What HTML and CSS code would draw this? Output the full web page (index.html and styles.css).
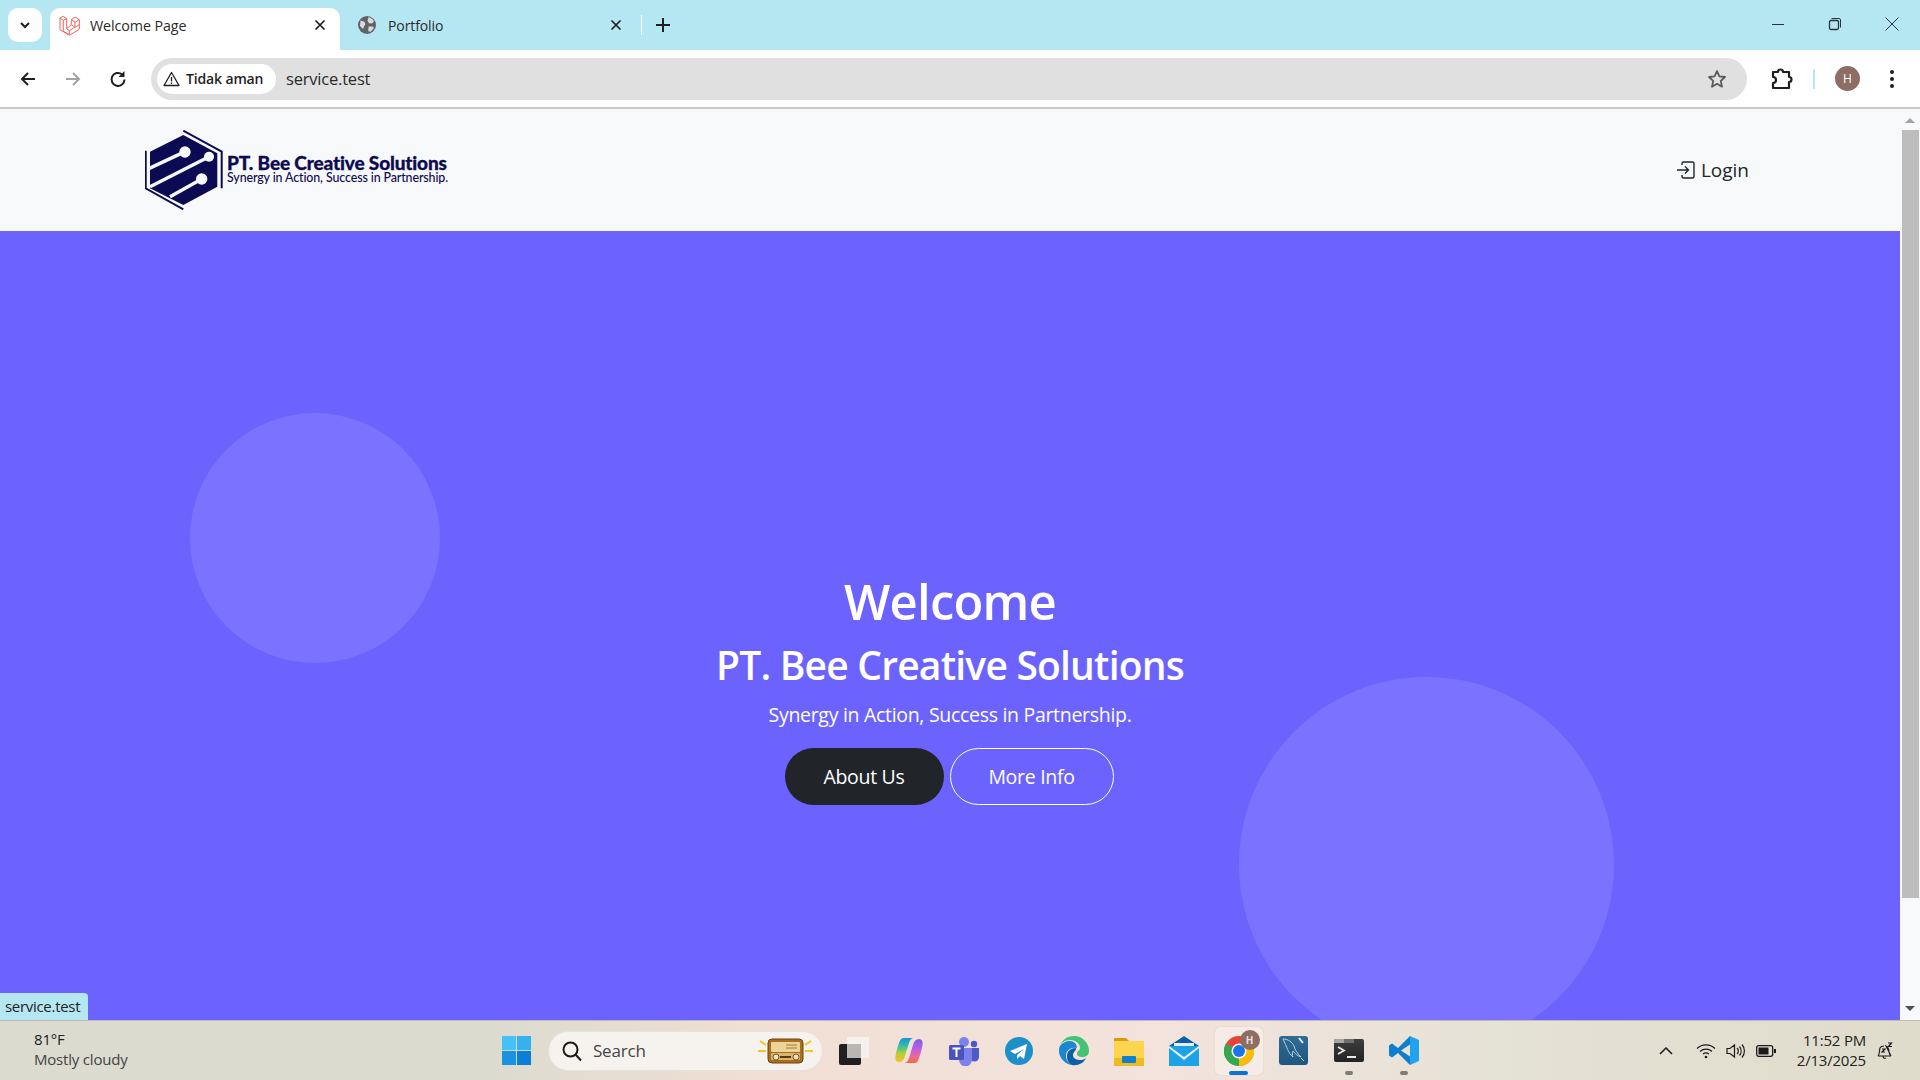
FILE: index.html
```html
<!DOCTYPE html>
<html lang="en">
<head>
<meta charset="utf-8">
<title>Welcome Page</title>
<link rel="stylesheet" href="styles.css">
</head>
<body>
<div class="tabstrip">
  <div class="tab-search"><svg width="12" height="12" viewBox="0 0 12 12"><path d="M2 4l4 4 4-4" fill="none" stroke="#1f1f1f" stroke-width="2"/></svg></div>
  <div class="tab tab-active">
    <svg class="fav" width="22" height="22" viewBox="0 0 22 22" fill="none" stroke="#f0665a" stroke-width="1" stroke-linejoin="round"><path d="M5.300 2.300L2 4v11.700l9.300 5.600 10-6V5.700L17 3l-3.700 2.700v5l-4.600 4V4.700zM2 4l3.300 2.300 3.400-1.600M5.300 6.300v11M5.300 17.300l6 3.300v-3.900l-2.600-2M11.300 16.700l10-6M13.300 5.700L17 8.300l4.300-2.600M17 8.300v4.900M13.300 10.700l3.700 2.500"/></svg>
    <span class="tab-title">Welcome Page</span>
    <svg class="tab-x" width="12" height="12" viewBox="0 0 12 12"><path d="M1.500 1.500l9 9M10.500 1.500l-9 9" stroke="#1f1f1f" stroke-width="1.700"/></svg>
  </div>
  <div class="tab">
    <svg class="fav" width="18" height="18" viewBox="0 0 18 18"><circle cx="9" cy="9" r="9" fill="#5f6368"/><path d="M10.500 1.200c2.500.5 4.500 2 5.500 4l-2 2.300-3-.3-1.500-2.500zM2.500 4.500L6 5.500 7.500 8 6 10.500 5 13 2 10z" fill="#d9dadb"/><path d="M10.500 10.500h4.500l.8 1.700-3.500 3.700-2-1z" fill="#d9dadb"/></svg>
    <span class="tab-title">Portfolio</span>
    <svg class="tab-x" width="12" height="12" viewBox="0 0 12 12"><path d="M1.500 1.500l9 9M10.500 1.500l-9 9" stroke="#1f1f1f" stroke-width="1.700"/></svg>
  </div>
  <div class="tab-sep"></div>
  <svg class="tab-plus" width="14" height="14" viewBox="0 0 14 14"><path d="M7 0v14M0 7h14" stroke="#1f1f1f" stroke-width="2"/></svg>
  <div class="win-controls">
    <svg width="14" height="14" viewBox="0 0 14 14"><path d="M1 7.500h12" stroke="#2a3338" stroke-width="1"/></svg>
    <svg width="14" height="14" viewBox="0 0 14 14" fill="none" stroke="#2a3338" stroke-width="1"><rect x="1.500" y="3.500" width="9" height="9" rx="1.500" stroke-width="1.300"/><path d="M3.500 1.500h7.500a1.500 1.500 0 0 1 1.500 1.500v7.500"/></svg>
    <svg width="14" height="14" viewBox="0 0 14 14"><path d="M.5.5l13 13M13.500.5l-13 13" stroke="#2a3338" stroke-width="1"/></svg>
  </div>
</div>
<div class="toolbar">
  <svg class="tool-ico" width="18" height="18" viewBox="0 0 18 18" fill="none" stroke="#1f1f1f" stroke-width="2"><path d="M16 9H3M9 3L3 9l6 6"/></svg>
  <svg class="tool-ico" width="18" height="18" viewBox="0 0 18 18" fill="none" stroke="#a3a3a3" stroke-width="2"><path d="M2 9h13M9 3l6 6-6 6"/></svg>
  <svg class="tool-ico" width="18" height="18" viewBox="0 0 18 18"><path d="M15.500 9.500A6.500 6.500 0 1 1 13 4.300" fill="none" stroke="#1f1f1f" stroke-width="2"/><path d="M15.500 1v6h-6z" fill="#1f1f1f"/></svg>
  <div class="omnibox">
    <div class="chip">
      <svg width="17" height="16" viewBox="0 0 17 16" fill="none" stroke="#1f1f1f" stroke-width="1.300" stroke-linejoin="round"><path d="M8.500 1.500L16 14.500H1zM8.500 6v4.500M8.500 11.500v1.500"/></svg>
      <span>Tidak aman</span>
    </div>
    <span class="url">service.test</span>
    <svg class="star" width="20" height="20" viewBox="0 0 20 20" fill="none" stroke="#5b5b5b" stroke-width="1.800" stroke-linejoin="round"><path d="M10 2l2.400 5.400 5.600.6-4.200 3.900 1.200 5.800L10 14.800l-5 2.900 1.200-5.800L2 8l5.600-.6z"/></svg>
  </div>
  <svg class="ext" width="24" height="24" viewBox="0 0 24 24" fill="none" stroke="#1f1f1f" stroke-width="2.200" stroke-linejoin="round"><path d="M4 5h5a2.500 2.500 0 0 1 5 0h6v5a2.500 2.500 0 0 1 0 5v6H4v-5a3 3 0 0 0 0-6z"/></svg>
  <div class="tool-sep"></div>
  <div class="avatar">H</div>
  <svg class="dots" width="6" height="20" viewBox="0 0 6 20" fill="#1f1f1f"><circle cx="3" cy="3" r="2"/><circle cx="3" cy="10" r="2"/><circle cx="3" cy="17" r="2"/></svg>
</div>
<div class="viewport">
  <main class="page">
    <nav class="navbar">
      <div class="brand">
        <svg width="80" height="80" viewBox="0 0 80 80">
          <path d="M38.300.7L76.700 21.700V58.300" fill="none" stroke="#0c0a52" stroke-width="2"/>
          <path d="M.7 20.700V58.300L38.300 79.300" fill="none" stroke="#0c0a52" stroke-width="2"/>
          <path d="M5 21.700L38.300 5 72.300 23.300V56.700L38.300 75 5 58.300z" fill="#0c0a52"/>
          <path d="M4.300 38.300L40 21.700M5 56.700L64 26.700M25 66.700L56.700 49" fill="none" stroke="#f8f9fa" stroke-width="3.500"/>
          <circle cx="40" cy="22" r="5.700" fill="#f8f9fa"/><circle cx="64" cy="26.700" r="5" fill="#f8f9fa"/><circle cx="56.700" cy="49" r="5.700" fill="#f8f9fa"/>
        </svg>
        <div class="brand-text">
          <span class="brand-name">PT. Bee Creative Solutions</span>
          <span class="brand-tag">Synergy in Action, Success in Partnership.</span>
        </div>
      </div>
      <a class="login"><svg width="20" height="20" viewBox="0 0 20 20" fill="none" stroke="#212529" stroke-width="1.400"><path d="M6 5V3.500A1.500 1.500 0 0 1 7.500 2h9A1.500 1.500 0 0 1 18 3.500v13a1.500 1.500 0 0 1-1.500 1.500h-9A1.500 1.500 0 0 1 6 16.500V15M1 10h11M9 6.500l3.500 3.500L9 13.500"/></svg>Login</a>
    </nav>
    <section class="hero">
      <div class="circle circle-a"></div>
      <div class="circle circle-b"></div>
      <h1>Welcome</h1>
      <h2>PT. Bee Creative Solutions</h2>
      <p>Synergy in Action, Success in Partnership.</p>
      <div class="actions">
        <a class="btn btn-dark">About Us</a>
        <a class="btn btn-line">More Info</a>
      </div>
    </section>
    <div class="status">service.test</div>
  </main>
  <aside class="scrollbar">
    <svg width="20" height="14" viewBox="0 0 20 14"><path d="M5 10l5-5 5 5z" fill="#a3a3a3"/></svg>
    <div class="thumb"></div>
    <svg width="20" height="14" viewBox="0 0 20 14"><path d="M5 4l5 5 5-5z" fill="#505050"/></svg>
  </aside>
</div>
<footer class="taskbar">
  <div class="weather"><span class="temp">81°F</span><span class="cond">Mostly cloudy</span></div>
  <div class="task-center">
    <svg class="start" width="29" height="29" viewBox="0 0 30 30"><rect width="14.500" height="14.500" fill="#45c1f5"/><rect x="15.500" width="14.500" height="14.500" fill="#36b0ee"/><rect y="15.500" width="14.500" height="14.500" fill="#1a92e2"/><rect x="15.500" y="15.500" width="14.500" height="14.500" fill="#0b7ed8"/></svg>
    <div class="search">
      <svg width="22" height="22" viewBox="0 0 22 22" fill="none" stroke="#1b1b1b" stroke-width="2"><circle cx="9.500" cy="9.500" r="7"/><path d="M14.500 14.500l5.500 6"/></svg>
      <span>Search</span>
      <svg class="radio" width="55" height="26" viewBox="0 0 55 26"><path d="M2 3l6 4M0 13h8M53 3l-6 4M55 13h-8" stroke="#f2c81e" stroke-width="2"/><rect x="10" y="1" width="35" height="24" rx="4" fill="#a96e1e" stroke="#6e4310"/><rect x="13" y="4" width="29" height="10" rx="1" fill="#ecd39a"/><path d="M28 7h11M28 10h11" stroke="#a8762c"/><rect x="13" y="15" width="29" height="7" rx="1" fill="#d9b56e"/><path d="M22 19h11" stroke="#5a3a14" stroke-width="2"/><circle cx="18" cy="19" r="3" fill="#f0e0b8" stroke="#5a3a14" stroke-width=".8"/><circle cx="38" cy="19" r="3" fill="#f0e0b8" stroke="#5a3a14" stroke-width=".8"/></svg>
    </div>
    <div class="apps">
      <span class="app"><svg width="30" height="28" viewBox="0 0 30 28"><rect x="0" y="7" width="22" height="21" rx="2" fill="#1f1f1f"/><rect x="8" y="0" width="22" height="21" rx="1" fill="#f5f1ec"/><rect x="8" y="7" width="14" height="14" fill="#b9b7b3"/></svg></span>
      <span class="app"><svg width="28" height="25" viewBox="0 0 28 25"><defs><linearGradient id="cpa" x1="0" y1="0" x2="0" y2="1"><stop offset="0" stop-color="#1f8fe0"/><stop offset=".35" stop-color="#37c2a0"/><stop offset=".65" stop-color="#b8d030"/><stop offset="1" stop-color="#f5c030"/></linearGradient><linearGradient id="cpb" x1="0" y1="0" x2="0" y2="1"><stop offset="0" stop-color="#7a5fe8"/><stop offset=".45" stop-color="#c060e0"/><stop offset=".75" stop-color="#f06a90"/><stop offset="1" stop-color="#f0683a"/></linearGradient></defs><path d="M9 0H20C16 0 15 2 14 5L10 18C9 22 7 24 4 24 1 24 0 21 .5 18 1.500 12 3 8 4 5 5 2 6 0 9 0z" fill="url(#cpa)"/><path d="M19 25H8C12 25 13 23 14 20L18 7C19 3 21 1 24 1 27 1 28 4 27.500 7 26.500 13 25 17 24 20 23 23 22 25 19 25z" fill="url(#cpb)"/></svg></span>
      <span class="app"><svg width="30" height="30" viewBox="0 0 30 30"><circle cx="15" cy="6" r="5" fill="#7b83eb"/><circle cx="25" cy="8" r="3.200" fill="#5059c9"/><path d="M21 12h9v9a4.500 4.500 0 0 1-9 0z" fill="#5059c9"/><path d="M8 12h15v12a6.500 6.500 0 0 1-13 0z" fill="#7b83eb"/><rect x="0" y="9" width="15" height="15" rx="1.500" fill="#4b53bc"/><path d="M3.500 12.500h8M7.500 12.500v8.500" stroke="#fff" stroke-width="2"/></svg></span>
      <span class="app"><svg width="28" height="28" viewBox="0 0 28 28"><circle cx="14" cy="14" r="14" fill="#1f8fc9"/><path d="M5 14l17-7-3 15-4-3-3 3v-4l7-6-9 5z" fill="#fff"/></svg></span>
      <span class="app"><svg width="30" height="30" viewBox="0 0 30 30"><path d="M15 0a15 15 0 0 1 15 15c0 4-3 6-7 6-3 0-5-1-5-3 0-4 3-3 3-6 0-5-5-8-10-8C6 4 2 7 1 10 3 4 8 0 15 0z" fill="#43c470"/><path d="M1 10c2-3 6-5 10-5 4 0 7 3 7 7-6-1-11 2-11 8 0 4 2 7 6 9-7-1-13-7-13-14 0-2 0-3 1-5z" fill="#1a87d0"/><path d="M13 29c-4-2-5-5-5-9 0-5 4-8 9-8 1 2-3 4-3 7 0 4 4 5 8 5 2 0 4-1 5-2-2 5-8 8-14 7z" fill="#0f5fa8"/></svg></span>
      <span class="app"><svg width="30" height="30" viewBox="0 0 30 30"><path d="M0 2h12l3 3h15v6H0z" fill="#d69b12"/><rect y="5" width="30" height="25" fill="#fcd54f"/><rect y="22" width="30" height="8" fill="#f0bb1f"/><rect x="8" y="20" width="14" height="7" rx="1" fill="#0f7fcf"/></svg></span>
      <span class="app"><svg width="30" height="30" viewBox="0 0 30 30"><path d="M15 0L30 10v3H0v-3z" fill="#0b5fa8"/><path d="M5 7h20v9H5z" fill="#e9eef1"/><rect y="10" width="30" height="20" fill="#1ea2e6"/><path d="M0 10l15 11 15-11v2L15 24 0 12z" fill="#eaf4fa"/></svg></span>
      <span class="app app-active">
        <svg width="30" height="30" viewBox="0 0 30 30"><circle cx="15" cy="15" r="15" fill="#ea4335"/><path d="M15 15L28 7.500A15 15 0 0 1 15 30z" fill="#fbbc05"/><path d="M15 15L15 30A15 15 0 0 1 2 7.500z" fill="#34a853"/><circle cx="15" cy="15" r="7.500" fill="#fff"/><circle cx="15" cy="15" r="6" fill="#1a73e8"/></svg>
        <span class="badge">H</span>
        <span class="indicator"></span>
      </span>
      <span class="app"><svg width="29" height="29" viewBox="0 0 29 29"><defs><linearGradient id="my" x1="0" y1="0" x2="0" y2="1"><stop offset="0" stop-color="#2f6c96"/><stop offset="1" stop-color="#1f567f"/></linearGradient></defs><rect width="29" height="29" rx="3" fill="url(#my)"/><path d="M4 3c5 0 9 3 11 7 1 4 3 7 7 11-3-1-6-3-8-6-1 2-1 4 0 6-5-4-6-10-10-18z" fill="none" stroke="#bcd0dc" stroke-width="1"/><path d="M20 2l4 5" stroke="#e6eef2" stroke-width="2"/><path d="M22 22l3 3" stroke="#bcd0dc"/></svg></span>
      <span class="app"><svg width="30" height="23" viewBox="0 0 30 23"><defs><linearGradient id="tm" x1="0" y1="0" x2="0" y2="1"><stop offset="0" stop-color="#3e3e3e"/><stop offset="1" stop-color="#232323"/></linearGradient></defs><rect width="30" height="23" rx="2" fill="url(#tm)"/><path d="M2 0h8v4H0V2a2 2 0 0 1 2-2z" fill="#a5a5a5"/><rect x="10" width="10" height="4" fill="#6e6e6e"/><path d="M4 8l6 3.500-6 3.500" stroke="#e8e8e8" stroke-width="1.800" fill="none"/><path d="M13 18h9" stroke="#e8e8e8" stroke-width="2"/></svg><span class="dot"></span></span>
      <span class="app"><svg width="30" height="29" viewBox="0 0 30 29"><path d="M21 0l9 4v21l-9 4z" fill="#22a3f0"/><path d="M21 0L9 12 3 7.500 0 9.500v10l3 2L9 17l12 12v-8.500L12 14.500l9-6z" fill="#0d7fcc"/></svg><span class="dot"></span></span>
    </div>
  </div>
  <div class="tray">
    <svg class="chev" width="14" height="8" viewBox="0 0 14 8" fill="none" stroke="#1b1b1b" stroke-width="1.500"><path d="M1 7l6-6 6 6"/></svg>
    <svg width="20" height="16" viewBox="0 0 20 16" fill="none" stroke="#1b1b1b" stroke-width="1.200"><path d="M1 5.500a13 13 0 0 1 18 0M4 8.500a9 9 0 0 1 12 0M7 11a5 5 0 0 1 6 0"/><circle cx="10" cy="14" r="1.300" fill="#1b1b1b" stroke="none"/></svg>
    <svg width="20" height="16" viewBox="0 0 20 16" fill="none" stroke="#1b1b1b" stroke-width="1.200"><path d="M1 5.500h3L8.500 2v12L4 10.500H1zM11 5a4 4 0 0 1 0 6M13.500 3.500a7 7 0 0 1 0 9M16 1.500a10 10 0 0 1 0 13"/></svg>
    <svg width="20" height="14" viewBox="0 0 20 14"><rect x=".7" y="1.700" width="16" height="10.600" rx="2" fill="none" stroke="#1b1b1b" stroke-width="1.300"/><rect x="2.500" y="3.500" width="10" height="7" fill="#1b1b1b"/><rect x="18" y="5" width="2" height="4" fill="#1b1b1b"/></svg>
    <div class="clock"><span>11:52 PM</span><span>2/13/2025</span></div>
    <svg width="18" height="18" viewBox="0 0 18 18" fill="none" stroke="#1b1b1b" stroke-width="1.100"><path d="M2 14c2-2 1-5 2-8 1-2 3-2 4-2M10 4c2 1 3 3 3 6 0 1 1 3 2 4zM2 14h13M7 14a2 2 0 0 0 3 2"/><path d="M6 7h3l-3 3h3M12 1h3.500l-3 3.500H16" stroke-width="1.200"/></svg>
  </div>
</footer>
</body>
</html>
```
FILE: styles.css
```css
* { box-sizing: border-box; }
html, body { margin: 0; height: 100%; overflow: hidden; }
body { display: flex; flex-direction: column; height: 1080px; font-family: "Open Sans", "Noto Sans", sans-serif; color: #1f1f1f; background: #fff; }
.tabstrip { height: 50px; background: #b5e7f3; display: flex; align-items: flex-start; padding: 8px 0 0 8px; flex: none; }
.tab-search { width: 34px; height: 34px; margin-right: 8px; background: #fff; border-radius: 10px; display: flex; align-items: center; justify-content: center; }
.tab { width: 292px; height: 42px; display: flex; align-items: center; padding: 0 16px 8px 8px; font-size: 14px; letter-spacing: -.1px; }
.tab-active { background: #fff; border-radius: 10px 10px 0 0; margin-right: 6px; width: 290px; padding-right: 14px; font-size: 14.300px; }
.tab .fav { margin-right: 10px; flex: none; }
.tab:not(.tab-active) .fav { margin-left: 4px; margin-right: 12px; }
.tab-title { flex: 1; color: #2b2b2b; }
.tab-x { flex: none; }
.tab-sep { width: 1px; height: 20px; margin: 7px 14px 0 3px; background: #fff; }
.tab-plus { margin-top: 10px; }
.win-controls { margin-left: auto; display: flex; gap: 43px; padding: 9px 21px 0 0; margin-top: -8px; padding-top: 17px; }
.toolbar { height: 59px; background: #fff; border-radius: 10px 10px 0 0; display: flex; align-items: center; padding: 0 0 0 19px; flex: none; border-bottom: 2px solid #c9cbc9; }
.tool-ico { margin-right: 27px; flex: none; }
.tool-ico:nth-child(3) { margin-right: 24px; }
.omnibox { width: 1596px; height: 42px; background: #e0e0e0; border-radius: 21px; display: flex; align-items: center; padding: 0 20px 0 6px; flex: none; }
.chip { height: 30px; width: 119px; border-radius: 15px; background: #fff; display: flex; align-items: center; padding-left: 6px; gap: 6px; font-size: 14px; font-weight: 600; letter-spacing: -.15px; flex: none; }
.url { flex: 1; margin-left: 10px; font-size: 16.500px; letter-spacing: -.2px; color: #2b2b2b; }
.ext { margin-left: 22px; flex: none; }
.tool-sep { width: 2px; height: 20px; background: #b5e7f3; margin-left: 20px; flex: none; }
.avatar { margin-left: 20px; width: 25px; height: 25px; border-radius: 50%; background: #8d6e63; color: #fff; font-size: 12px; display: flex; align-items: center; justify-content: center; flex: none; }
.dots { margin-left: 29px; flex: none; }
.viewport { flex: 1; display: flex; min-height: 0; }
.page { flex: 1; display: flex; flex-direction: column; position: relative; min-width: 0; }
.navbar { height: 122px; background: #f8f9fa; display: flex; align-items: center; justify-content: space-between; padding: 0 151px 0 145px; flex: none; }
.brand { display: flex; align-items: center; gap: 2px; }
.brand-text { display: flex; flex-direction: column; color: #0c0a52; }
.brand-name { font-family: "Lato", sans-serif; font-weight: 900; font-size: 19px; line-height: 16px; letter-spacing: -.15px; -webkit-text-stroke: .3px #0c0a52; }
.brand-tag { font-family: "Lato", sans-serif; font-size: 12.400px; line-height: 14px; font-weight: 500; letter-spacing: -.1px; }
.login { display: flex; align-items: center; gap: 5px; font-size: 19px; color: #212529; }
.hero { flex: 1; background: #6c63ff; position: relative; overflow: hidden; display: flex; flex-direction: column; align-items: center; justify-content: center; color: #fff; padding-top: 123px; }
.hero h1 { margin: 0; font-size: 49px; line-height: 62px; font-weight: 600; letter-spacing: -.8px; position: relative; }
.hero h2 { margin: 9px 0 0; font-size: 39px; line-height: 48px; font-weight: 600; letter-spacing: -.8px; position: relative; }
.hero p { margin: 11px 0 0; font-size: 19.500px; line-height: 30px; letter-spacing: -.3px; position: relative; }
.actions { display: flex; gap: 6px; margin: 18px 0 0 -2px; position: relative; }
.btn { height: 57px; border-radius: 29px; display: flex; align-items: center; justify-content: center; font-size: 19.500px; letter-spacing: -.3px; }
.btn-dark { width: 159px; background: #212529; }
.btn-line { width: 164px; border: 1px solid #fff; }
.circle { position: absolute; border-radius: 50%; background: rgba(255,255,255,.1); }
.circle-a { left: 190px; top: 182px; width: 250px; height: 250px; }
.circle-b { left: 1239px; top: 446px; width: 375px; height: 375px; }
.status { position: absolute; left: 0; bottom: 0; height: 27px; width: 88px; background: #b5e7f3; border-radius: 0 4px 0 0; font-size: 15px; line-height: 27px; padding-left: 5px; letter-spacing: -.3px; color: #222; }
.scrollbar { width: 20px; background: #f8f9fa; display: flex; flex-direction: column; align-items: center; padding: 4px 0 4px; flex: none; }
.thumb { width: 17px; height: 768px; background: #bdbdbd; margin: 3px 0 auto; }
.taskbar { height: 60px; flex: none; border-top: 1px solid #bdbcb4; background: linear-gradient(90deg, #dbdbcf 0%, #dbdbcf 25%, #f1dfd5 40%, #f3e3dc 60%, #e5e2d6 78%, #dfdccc 100%); display: flex; align-items: center; color: #222; }
.weather { width: 502px; padding-left: 34px; margin-top: -3px; display: flex; flex-direction: column; font-size: 15px; line-height: 20px; letter-spacing: -.2px; flex: none; }
.cond { color: #444; }
.task-center { display: flex; align-items: center; flex: none; }
.start { flex: none; margin-right: 17px; }
.search { width: 275px; height: 40px; background: #f6f3ef; border: 1px solid #e6e3dd; border-radius: 20px; display: flex; align-items: center; padding: 0 9px 0 12px; gap: 10px; font-size: 17px; color: #444; margin-right: 3px; }
.search span { flex: 1; letter-spacing: -.2px; }
.apps { display: flex; align-items: center; }
.app { width: 55px; height: 48px; position: relative; display: flex; align-items: center; justify-content: center; flex: none; }
.app-active { background: #f4ece5; border-radius: 5px; width: 48px; margin: 0 3.500px; box-shadow: 0 0 1px rgba(0,0,0,.2); }
.badge { position: absolute; right: 3px; top: 3px; width: 20px; height: 20px; border-radius: 50%; background: #8d6e63; color: #e9dfda; font-size: 10px; font-weight: 700; display: flex; align-items: center; justify-content: center; }
.indicator { position: absolute; left: 14.500px; bottom: 0; width: 19px; height: 4px; border-radius: 2px; background: #0a74d1; }
.dot { position: absolute; left: 23.500px; bottom: 0; width: 8px; height: 4px; border-radius: 2px; background: #7d7d78; }
.tray { margin-left: auto; display: flex; align-items: center; gap: 10px; padding-right: 26px; }
.chev { margin-right: 13px; }
.clock { display: flex; flex-direction: column; align-items: flex-end; font-size: 15px; line-height: 20px; letter-spacing: -.2px; margin: -2px 0 0 11px; }
```
